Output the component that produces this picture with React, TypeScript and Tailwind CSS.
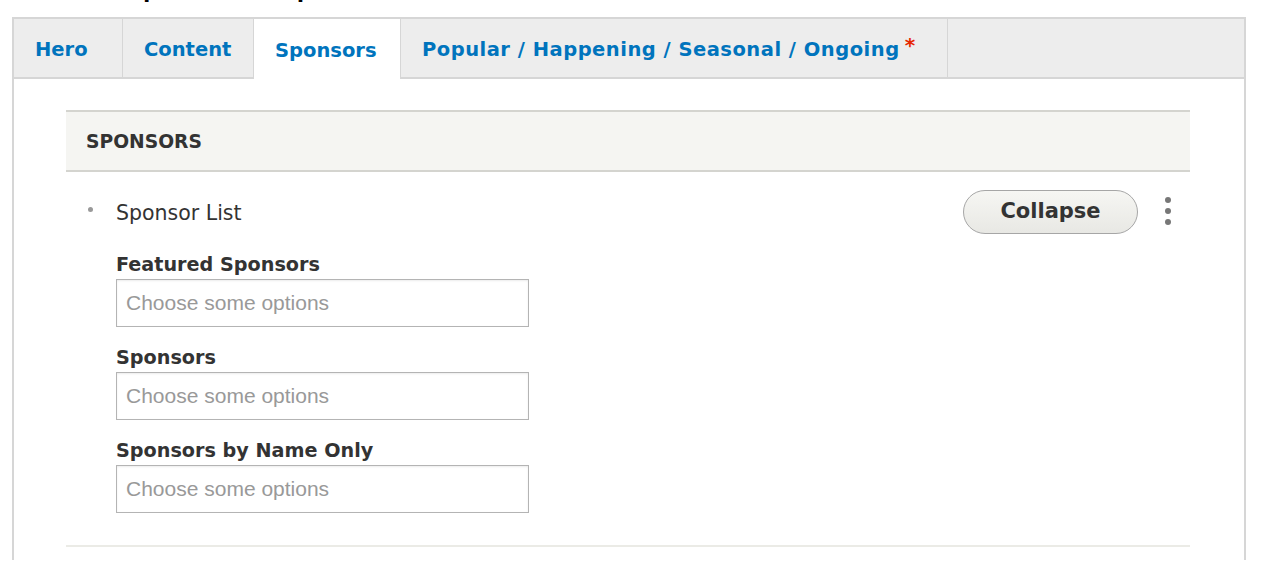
import { useState } from "react";

const tabs = [
  { label: "Hero", width: "w-[109px]", tracking: "" },
  { label: "Content", width: "w-[131px]", tracking: "" },
  { label: "Sponsors", width: "w-[147px]", tracking: "" },
  { label: "Popular / Happening / Seasonal / Ongoing", width: "w-[547px]", tracking: "tracking-[0.5px]", required: true },
];

const fields = ["Featured Sponsors", "Sponsors", "Sponsors by Name Only"];

function Kebab() {
  return (
    <div className="flex flex-col items-center gap-[5px] w-[12px]">
      <span className="w-[6px] h-[6px] rounded-full bg-[#777]" />
      <span className="w-[6px] h-[6px] rounded-full bg-[#777]" />
      <span className="w-[6px] h-[6px] rounded-full bg-[#777]" />
    </div>
  );
}

export default function App() {
  const [active, setActive] = useState("Sponsors");

  return (
    <div className="w-[1264px] h-[576px] overflow-hidden bg-white font-['DejaVu_Sans',sans-serif]">
      {/* page title, scrolled mostly out of view */}
      <div className="h-[17px] overflow-hidden">
        <h1 className="-mt-[41px] pl-[112px] text-[40px] leading-[40px] text-black">Update Sponsors</h1>
      </div>

      <div className="mx-[12px] w-[1234px]">
        {/* Tabs */}
        <div className="flex h-[62px] bg-[#ededed] border-t-2 border-x-2 border-[#d6d6d6]">
          {tabs.map((t) => {
            const isActive = t.label === active;
            return (
              <button
                key={t.label}
                onClick={() => setActive(t.label)}
                className={`${t.width} ${t.tracking} flex items-center pl-[21px] pt-[3px] border-r border-[#d6d6d6] text-[19.5px] font-bold text-[#0074bd] ${
                  isActive ? "bg-white pt-[1px]" : "border-b-2"
                }`}
              >
                {t.label}
                {t.required && <span className="text-[#e62600] ml-[5px] -mt-[10px] text-[20px]">*</span>}
              </button>
            );
          })}
          <div className="flex-1 border-b-2 border-[#d6d6d6]" />
        </div>

        {/* Panel */}
        <div className="h-[481px] border-x-2 border-[#d6d6d6] pt-[31px] pl-[52px] pr-[54px]">
          <div className="h-[62px] flex items-center pl-[20px] pt-[2px] bg-[#f5f5f2] border-y-2 border-[#d4d4cf]">
            <h2 className="text-[18.7px] font-bold text-[#333]">SPONSORS</h2>
          </div>

          <div className="pt-[18px] pb-[32px] border-b-2 border-[#ebebe6]">
            <div className="flex items-center h-[44px]">
              <span className="w-[50px] shrink-0 pl-[22px] flex -mt-[5px]">
                <span className="w-[5px] h-[5px] rounded-full bg-[#999]" />
              </span>
              <span className="text-[20.5px] text-[#333] mt-[3px]">Sponsor List</span>
              <div className="flex-1" />
              <button className="w-[175px] h-[44px] rounded-full border border-[#a6a6a6] bg-gradient-to-b from-[#f6f6f3] to-[#e8e8e4] text-[21px] font-bold text-[#333]">
                Collapse
              </button>
              <div className="w-[52px] shrink-0 flex pl-[24px] -mt-[2px]">
                <Kebab />
              </div>
            </div>

            <div className="pl-[50px] pt-[19px] flex flex-col gap-[19px]">
              {fields.map((f) => (
                <div key={f}>
                  <label className="block text-[19.2px] leading-[24px] font-bold text-[#333] mb-[2px]">{f}</label>
                  <div className="w-[413px] h-[48px] border border-[#b4b4b4] flex items-center pl-[9px] shadow-[inset_0_1px_2px_rgba(0,0,0,0.08)]">
                    <span className="font-['Liberation_Sans',Arial,sans-serif] text-[21px] text-[#999]">
                      Choose some options
                    </span>
                  </div>
                </div>
              ))}
            </div>
          </div>
        </div>
      </div>
    </div>
  );
}
